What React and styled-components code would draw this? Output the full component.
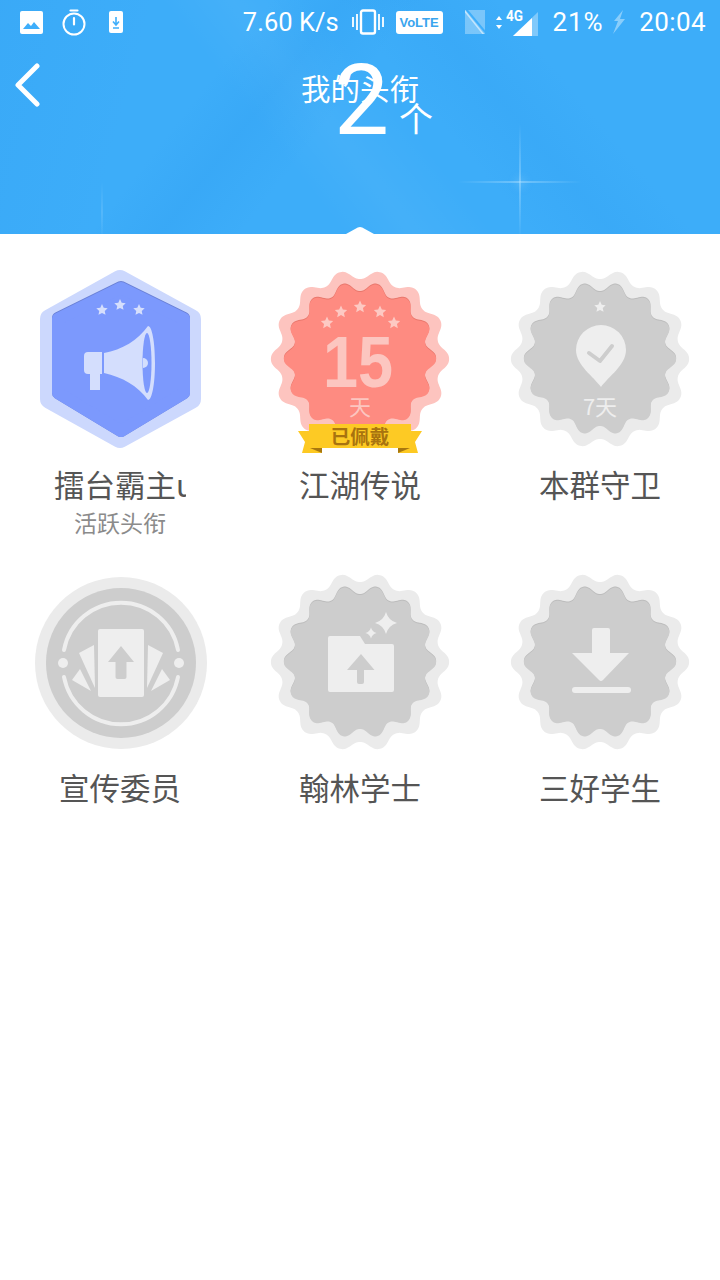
import React from 'react';
import styled, { createGlobalStyle } from 'styled-components';

const CJK = `"Noto Sans CJK SC", "Noto Sans", sans-serif`;

const GlobalStyle = createGlobalStyle`
  html, body {
    margin: 0;
    padding: 0;
    background: #fff;
  }
  body {
    width: 720px;
    height: 1280px;
    overflow: hidden;
    font-family: Roboto, ${CJK};
  }
`;

const Page = styled.div`
  width: 720px;
  height: 1280px;
  background: #fff;
`;

const Header = styled.header`
  position: relative;
  height: 234px;
  overflow: hidden;
  background:
    linear-gradient(128deg, transparent 0 30%, rgba(20, 130, 225, .10) 38%, transparent 47%),
    linear-gradient(52deg, transparent 0 38%, rgba(255, 255, 255, .04) 46%, transparent 55%),
    linear-gradient(230deg, transparent 0 24%, rgba(20, 130, 225, .08) 33%, transparent 42%),
    linear-gradient(105deg, rgba(20, 130, 225, .08) 0, transparent 20%),
    #3dadf9;
`;

const Glint = styled.span`
  position: absolute;
  left: ${p => p.$x}px;
  top: ${p => p.$y}px;
  width: 1px;
  height: 1px;
  box-shadow: 0 0 ${p => (p.$w ? 9 : 0)}px ${p => (p.$w ? 3 : 0)}px rgba(190, 230, 255, ${p => (p.$w ? .35 : 0)});
  &::before, &::after {
    content: '';
    position: absolute;
  }
  &::before {
    left: ${p => -p.$w}px;
    top: -1px;
    width: ${p => p.$w * 2}px;
    height: 2px;
    background: linear-gradient(90deg, transparent, rgba(190, 230, 255, ${p => p.$a}) 50%, transparent);
  }
  &::after {
    left: -1px;
    top: ${p => -p.$h}px;
    width: 2px;
    height: ${p => p.$h * 2}px;
    background: linear-gradient(180deg, transparent, rgba(190, 230, 255, ${p => p.$a}) 50%, transparent);
  }
`;

const Notch = styled.span`
  position: absolute;
  left: 346px;
  bottom: 0;
  width: 28px;
  height: 7px;
  background: #fff;
  clip-path: polygon(0 100%, 42% 8%, 50% 0, 58% 8%, 100% 100%);
`;

const StatusBar = styled.div`
  position: relative;
  display: flex;
  align-items: center;
  height: 44px;
  padding: 0 14px 0 20px;
  color: #fff;
`;

const StatusIcon = styled.svg`
  flex: none;
  display: block;
  margin-left: ${p => p.$gap || 0}px;
`;

const StatusText = styled.span`
  flex: none;
  margin-left: ${p => p.$gap || 0}px;
  font: 400 ${p => p.$size || 26}px/44px Roboto, sans-serif;
  letter-spacing: ${p => p.$track || 0}px;
`;

const Spacer = styled.span`
  flex: 1;
`;

const VolteTag = styled.span`
  flex: none;
  width: 47px;
  height: 23px;
  margin-left: 12px;
  border-radius: 3px;
  background: #fff;
  color: #3aa5ee;
  font: 700 13px/23px "Liberation Sans", sans-serif;
  text-align: center;
`;

const Nav = styled.nav`
  position: relative;
  display: grid;
  grid-template-columns: 1fr auto 1fr;
  align-items: center;
  height: 86px;
  color: #fff;
`;

const BackIcon = styled.svg`
  display: block;
  margin: -4px 0 0 14px;
`;

const Title = styled.h1`
  margin: 0;
  font: 400 29.5px/40px ${CJK};
  color: #fff;
`;

const Count = styled.div`
  position: absolute;
  left: 334px;
  top: -3px;
  display: flex;
  align-items: baseline;
  gap: 10px;
  color: #fff;
  font: 400 98px/120px Roboto, sans-serif;
`;

const CountUnit = styled.span`
  position: relative;
  top: -2px;
  font: 400 34px/40px ${CJK};
`;

const Grid = styled.main`
  display: grid;
  grid-template-columns: repeat(3, 240px);
  grid-auto-rows: 303px;
  padding-top: 35px;
`;

const Cell = styled.section`
  display: flex;
  flex-direction: column;
  align-items: center;
`;

const Medal = styled.svg`
  display: block;
  flex: none;
  overflow: visible;
  margin-bottom: 15px;
`;

const MedalText = styled.text`
  font-family: ${p => (p.$latin ? `"Liberation Sans", ${CJK}` : CJK)};
  font-weight: ${p => p.$weight || 400};
  font-size: ${p => p.$size}px;
  fill: ${p => p.$fill};
  text-anchor: middle;
`;

const Label = styled.div`
  max-width: 132px;
  overflow: hidden;
  white-space: nowrap;
  color: #555;
  font: 400 30.500px/40px ${CJK};
`;

const SubLabel = styled.div`
  margin-top: 2px;
  color: #8b8b8b;
  font: 400 23px/32px ${CJK};
`;

// scalloped badge edge: 14 lobes, valley at 12 o'clock
const wave = (radius, amp, cx = 90, cy = 90) => {
  const pts = [];
  for (let i = 0; i < 420; i++) {
    const t = (i / 420) * Math.PI * 2;
    const r = radius - amp * (Math.cos(14 * t) - .04 * Math.cos(42 * t));
    pts.push(`${(cx + r * Math.sin(t)).toFixed(2)},${(cy - r * Math.cos(t)).toFixed(2)}`);
  }
  return `M${pts.join('L')}Z`;
};

const starPoints = (cx, cy, r) => {
  const pts = [];
  for (let i = 0; i < 10; i++) {
    const a = (i / 10) * Math.PI * 2;
    const d = i % 2 ? r * .48 : r;
    pts.push(`${(cx + d * Math.sin(a)).toFixed(2)},${(cy - d * Math.cos(a)).toFixed(2)}`);
  }
  return pts.join(' ');
};

const Stars = ({ at, r, fill }) => at.map(([x, y]) => (
  <polygon key={x} points={starPoints(x, y, r)} fill={fill} />
));

const sparkle = (cx, cy, r) => {
  const k = r * .22;
  return `M${cx} ${cy - r}Q${cx + k} ${cy - k} ${cx + r} ${cy}Q${cx + k} ${cy + k} ${cx} ${cy + r}Q${cx - k} ${cy + k} ${cx - r} ${cy}Q${cx - k} ${cy - k} ${cx} ${cy - r}Z`;
};

const GREY = { edge: '#ebebeb', body: '#cdcdcd', line: '#bcbcbc', ink: '#eeeeee' };

const WavyBase = ({ edge, body, line }) => (
  <>
    <path d={wave(84.5, 4.8)} fill={edge} />
    <path d={wave(71.5, 4.8, 90, 89)} fill={line} />
    <path d={wave(71.5, 4.8)} fill={body} />
  </>
);

const HexMedal = () => (
  <Medal width="180" height="180" viewBox="0 0 180 180">
    <polygon points="90,11 161,50 161,130 90,169 20,130 20,50" fill="#ccd8fd" stroke="#ccd8fd" strokeWidth="20" strokeLinejoin="round" />
    <polygon points="91,18 154,49 154,124 91,162 28,124 28,49" fill="#6a80d6" stroke="#6a80d6" strokeWidth="12" strokeLinejoin="round" />
    <polygon points="91,19 154,50 154,124 91,162 28,124 28,50" fill="#7c99fd" stroke="#7c99fd" strokeWidth="12" strokeLinejoin="round" />
    <Stars at={[[72, 41], [90, 36], [109, 41]]} r={6} fill="#d6dffc" />
    <path d="M54 87a4 4 0 0 1 4-4h14v22H58a4 4 0 0 1-4-4z" fill="#d4defd" />
    <rect x="60" y="105" width="10" height="16" fill="#d4defd" />
    <path d="M74 84c18-3 34-13 44-27 4 0 7 16 7 37s-3 37-7 37C108 117 92 108 74 104z" fill="#d4defd" />
    <ellipse cx="117" cy="94" rx="4.500" ry="30" fill="#7c99fd" />
    <path d="M113 89a5 5 0 0 1 5 5 5 5 0 0 1-5 5z" fill="#d4defd" />
  </Medal>
);

const LegendMedal = () => (
  <Medal width="180" height="180" viewBox="0 0 180 180">
    <WavyBase edge="#fdc4bf" body="#fe8b81" line="#e8776c" />
    <Stars at={[[57, 54], [71, 43], [90, 38], [110, 43], [124, 54]]} r={6.5} fill="#fdc9c3" />
    <MedalText x="88" y="118" $latin $weight={700} $size={72} $fill="#fcc6c0" textLength="70" lengthAdjust="spacingAndGlyphs">15</MedalText>
    <MedalText x="90" y="146" $size={22} $fill="#fcc6c0">天</MedalText>
    <polygon points="28,162 42,162 52,184 32,184 35,173" fill="#fdc922" />
    <polygon points="152,162 138,162 128,184 148,184 145,173" fill="#fdc922" />
    <polygon points="40,179 52,179 52,184" fill="#a8780f" />
    <polygon points="140,179 128,179 128,184" fill="#a8780f" />
    <rect x="39" y="155" width="102" height="24" fill="#fdca24" />
    <MedalText x="90" y="175" $weight={700} $size={19.5} $fill="#a8730f">已佩戴</MedalText>
  </Medal>
);

const GuardMedal = () => (
  <Medal width="180" height="180" viewBox="0 0 180 180">
    <WavyBase {...GREY} />
    <Stars at={[[90, 38]]} r={6} fill={GREY.ink} />
    <path d="M91 118C84 108 66 96 66 81a25 25 0 0 1 50 0C116 96 98 108 91 118z" fill={GREY.ink} />
    <path d="M79 84l11 8 12-15" fill="none" stroke={GREY.body} strokeWidth="4" strokeLinecap="round" strokeLinejoin="round" />
    <MedalText x="90" y="146" $size={22} $fill={GREY.ink}>7天</MedalText>
  </Medal>
);

const PosterMedal = () => (
  <Medal width="180" height="180" viewBox="0 0 180 180">
    <circle cx="91" cy="91" r="86" fill={GREY.edge} />
    <circle cx="91" cy="91" r="75" fill={GREY.body} />
    <g transform="translate(1 1)">
      <path d="M33 77a58 58 0 0 1 114 0M33 104a58 58 0 0 0 114 0" fill="none" stroke={GREY.ink} strokeWidth="4" strokeLinecap="round" />
      <circle cx="32" cy="90" r="5" fill={GREY.ink} />
      <circle cx="148" cy="90" r="5" fill={GREY.ink} />
      <rect x="67" y="56" width="46" height="68" rx="2" fill={GREY.ink} />
      <path d="M90 73l13 16h-7.500v15a2 2 0 0 1-2 2h-7a2 2 0 0 1-2-2V89H77z" fill={GREY.body} />
      <polygon points="48,80 63,72 64,115" fill={GREY.ink} />
      <polygon points="41,107 49,96 60,118" fill={GREY.ink} />
      <polygon points="132,80 117,72 116,115" fill={GREY.ink} />
      <polygon points="139,107 131,96 120,118" fill={GREY.ink} />
    </g>
  </Medal>
);

const ScholarMedal = () => (
  <Medal width="180" height="180" viewBox="0 0 180 180">
    <WavyBase {...GREY} />
    <path d="M58 66a2 2 0 0 1 2-2h30l5 8h27a2 2 0 0 1 2 2v44a2 2 0 0 1-2 2H60a2 2 0 0 1-2-2z" fill={GREY.ink} />
    <path d="M91 82l13.500 16H94v12a2 2 0 0 1-2 2h-3a2 2 0 0 1-2-2V98H77z" fill={GREY.body} />
    <path d={sparkle(116, 51, 11)} fill={GREY.ink} />
    <path d={sparkle(101, 61, 5.5)} fill={GREY.ink} />
  </Medal>
);

const DownloadMedal = () => (
  <Medal width="180" height="180" viewBox="0 0 180 180">
    <WavyBase {...GREY} />
    <path d="M82 58a2 2 0 0 1 2-2h14a2 2 0 0 1 2 2v23h19L93 108a3 3 0 0 1-4 0L62 81h20z" fill={GREY.ink} />
    <rect x="62" y="115" width="59" height="6" rx="3" fill={GREY.ink} />
  </Medal>
);

const medals = [
  { id: 'arena', name: '擂台霸主u', sub: '活跃头衔', Badge: HexMedal },
  { id: 'legend', name: '江湖传说', Badge: LegendMedal },
  { id: 'guard', name: '本群守卫', Badge: GuardMedal },
  { id: 'poster', name: '宣传委员', Badge: PosterMedal },
  { id: 'scholar', name: '翰林学士', Badge: ScholarMedal },
  { id: 'download', name: '三好学生', Badge: DownloadMedal },
];

const Status = () => (
  <StatusBar>
    <StatusIcon width="23" height="23" viewBox="0 0 23 23">
      <rect width="23" height="23" rx="2" fill="#fff" />
      <path d="M3 18l5-6 3 3 3-4 6 7z" fill="#3eaefb" />
    </StatusIcon>
    <StatusIcon $gap={19} width="24" height="27" viewBox="0 0 24 27">
      <circle cx="12" cy="15" r="10.500" fill="none" stroke="#fff" strokeWidth="2" />
      <path d="M8.500 1.500h7M12 9v6.500" stroke="#fff" strokeWidth="2.200" strokeLinecap="round" />
    </StatusIcon>
    <StatusIcon $gap={23} width="14" height="22" viewBox="0 0 14 22">
      <rect width="14" height="22" rx="2" fill="#fff" />
      <path d="M7 6v7M4 10.500l3 3.500 3-3.500M4 17h6" fill="none" stroke="#3eaefb" strokeWidth="1.600" />
    </StatusIcon>
    <Spacer />
    <StatusText $size={25.5}>7.60 K/s</StatusText>
    <StatusIcon $gap={13} width="32" height="26" viewBox="0 0 32 26">
      <rect x="9" y="1.500" width="14" height="23" rx="2" fill="none" stroke="#fff" strokeWidth="2.400" />
      <path d="M1 8v10M5 5v16M27 5v16M31 8v10" stroke="#fff" strokeWidth="1.800" />
    </StatusIcon>
    <VolteTag>VoLTE</VolteTag>
    <StatusIcon $gap={22} width="20" height="24" viewBox="0 0 20 24">
      <path d="M0 0h20v24H0z" fill="#fff" fillOpacity=".32" />
      <path d="M1 -1l20 24" stroke="#3eaefb" strokeWidth="2" />
      <path d="M-1 0l20 25" stroke="#fff" strokeOpacity=".55" strokeWidth="1.500" />
    </StatusIcon>
    <StatusIcon $gap={11} width="42" height="30" viewBox="0 0 42 30">
      <path d="M3 9l3 4H0zM3 22l3-4H0z" fill="#fff" />
      <text x="10" y="14" fill="#fff" fontFamily="Roboto, sans-serif" fontWeight="700" fontSize="14" textLength="17" lengthAdjust="spacingAndGlyphs">4G</text>
      <path d="M17 29L42 5v24z" fill="#fff" fillOpacity=".35" />
      <path d="M17 29l19-18v18z" fill="#fff" />
    </StatusIcon>
    <StatusText $gap={15} $track={.8}>21%</StatusText>
    <StatusIcon $gap={8} width="15" height="24" viewBox="0 0 15 24">
      <path d="M12 0L3 11h4L2 24 14 9H9z" fill="#fff" fillOpacity=".4" />
    </StatusIcon>
    <StatusText $gap={13} $track={.4}>20:04</StatusText>
  </StatusBar>
);

const App = () => (
  <Page>
    <GlobalStyle />
    <Header>
      <Glint $x={520} $y={182} $w={62} $h={58} $a={.42} />
      <Glint $x={102} $y={212} $w={0} $h={30} $a={.18} />
      <Status />
      <Nav>
        <BackIcon width="26" height="44" viewBox="0 0 26 44">
          <path d="M23 3L4 22l19 19" fill="none" stroke="#fff" strokeWidth="5" strokeLinecap="round" strokeLinejoin="round" />
        </BackIcon>
        <Title>我的头衔</Title>
        <span />
        <Count>2<CountUnit>个</CountUnit></Count>
      </Nav>
      <Notch />
    </Header>
    <Grid>
      {medals.map(({ id, name, sub, Badge }) => (
        <Cell key={id}>
          <Badge />
          <Label>{name}</Label>
          {sub && <SubLabel>{sub}</SubLabel>}
        </Cell>
      ))}
    </Grid>
  </Page>
);

export default App;
